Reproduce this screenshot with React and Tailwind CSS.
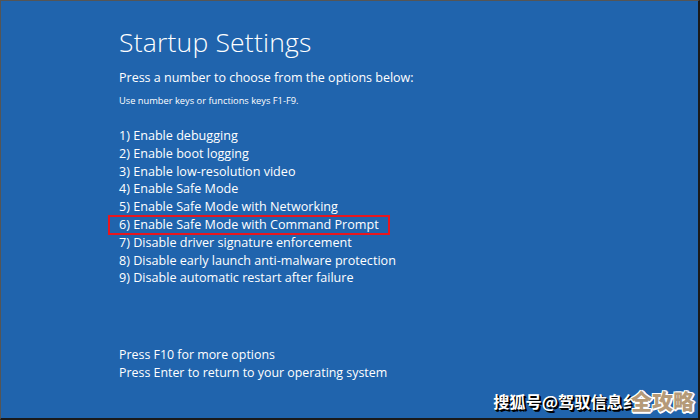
import React from "react";

const items = [
  "1) Enable debugging",
  "2) Enable boot logging",
  "3) Enable low-resolution video",
  "4) Enable Safe Mode",
  "5) Enable Safe Mode with Networking",
  "6) Enable Safe Mode with Command Prompt",
  "7) Disable driver signature enforcement",
  "8) Disable early launch anti-malware protection",
  "9) Disable automatic restart after failure",
];

export default function App() {
  return (
    <div
      className="relative w-[700px] h-[420px] overflow-hidden bg-[#2064ad] border-l border-t border-r-2 border-b-2 border-l-[#555] border-t-[#555] border-r-[#1a1a1a] border-b-[#1a1a1a] text-white"
      style={{ fontFamily: '"Open Sans", "Noto Sans", sans-serif' }}
    >
      <div className="flex flex-col pl-[118px] pt-[25px]">
        <div className="text-[26.5px] leading-[32px] font-light tracking-[0.2px]">Startup Settings</div>
        <div className="mt-[11px] text-[12.5px] leading-[18px]">Press a number to choose from the options below:</div>
        <div className="mt-[8px] text-[9.3px] leading-[12px]">Use number keys or functions keys F1-F9.</div>
        <div className="mt-[20px] flex flex-col">
          {items.map((t, i) => (
            <div key={i} className="relative h-[17.8px] text-[12.6px] leading-[17.8px]">
              {i === 5 && (
                <div className="absolute left-[-11px] top-[-1px] w-[282px] h-[20px] border-2 border-[#e8161e]" />
              )}
              <span className="relative">{t}</span>
            </div>
          ))}
        </div>
        <div className="mt-[59px] flex flex-col text-[12.4px] leading-[18px]">
          <div>Press F10 for more options</div>
          <div>Press Enter to return to your operating system</div>
        </div>
      </div>
      <div className="absolute right-[4px] bottom-[6px] flex items-end" style={{ fontFamily: '"Noto Sans CJK SC", sans-serif' }}>
        <span
          className="text-[16.2px] leading-[21px] font-bold text-white"
          style={{ textShadow: "1px 1px 0 #000, 2px 2px 0 #000" }}
        >
          搜狐号@驾驭信息纟
        </span>
        <span
          className="ml-[-8px] text-[21px] leading-[24px] font-black text-[#b59a78]"
          style={{ textShadow: "-1px -1px 0 #fff, 1px -1px 0 #fff, -1px 1px 0 #fff, 1px 1px 0 #fff, 0 2px 0 #fff, 2px 0 0 #fff" }}
        >
          全攻略
        </span>
      </div>
    </div>
  );
}
